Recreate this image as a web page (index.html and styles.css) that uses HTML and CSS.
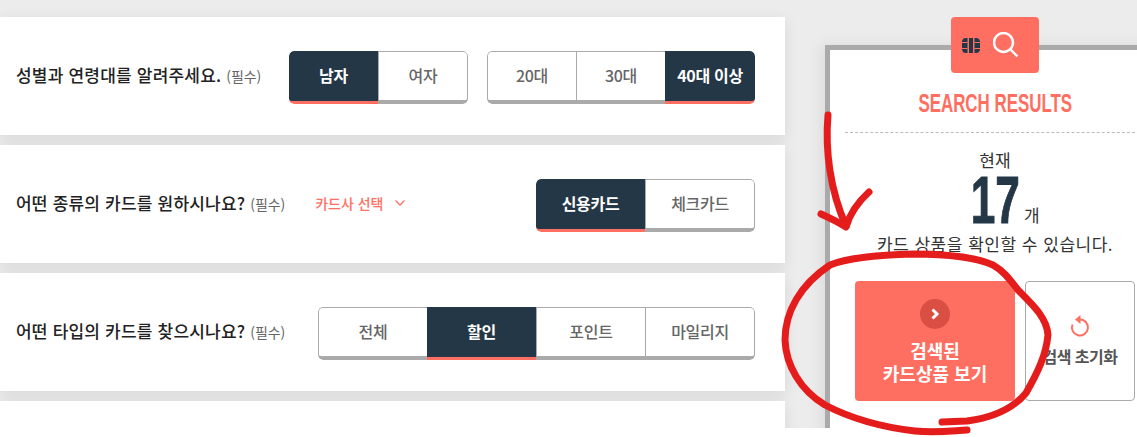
FILE: index.html
```html
<!DOCTYPE html>
<html lang="ko">
<head>
<meta charset="utf-8">
<title>카드 검색</title>
<link rel="stylesheet" href="styles.css">
</head>
<body>
<main class="page">
  <section class="filters">
    <div class="row">
      <p class="question">성별과 연령대를 알려주세요. <small>(필수)</small></p>
      <div class="controls">
        <div class="seg narrow w-179"><button class="on">남자</button><button>여자</button></div>
        <div class="seg narrow w-268"><button>20대</button><button>30대</button><button class="on">40대 이상</button></div>
      </div>
    </div>
    <div class="row">
      <p class="question">어떤 종류의 카드를 원하시나요? <small>(필수)</small></p>
      <a class="company">카드사 선택
        <svg width="12" height="8" viewBox="0 0 12 8"><path d="M1.500 1.500 6 6l4.500-4.500" fill="none" stroke="#ff6f61" stroke-width="1.300"/></svg>
      </a>
      <div class="controls">
        <div class="seg wide w-219"><button class="on">신용카드</button><button>체크카드</button></div>
      </div>
    </div>
    <div class="row">
      <p class="question">어떤 타입의 카드를 찾으시나요? <small>(필수)</small></p>
      <div class="controls">
        <div class="seg wide w-437"><button>전체</button><button class="on">할인</button><button>포인트</button><button>마일리지</button></div>
      </div>
    </div>
    <div class="row"></div>
  </section>
  <aside class="results">
    <div class="tab">
      <svg class="tab-chip" width="18" height="15" viewBox="0 0 18 15"><path d="M4 0h1.500v15H4C1.500 15 0 13.500 0 11V4C0 1.500 1.500 0 4 0ZM7 0h4v15H7ZM12.500 0H14c2.500 0 4 1.500 4 4v7c0 2.500-1.500 4-4 4h-1.500Z" fill="#243746"/><path d="M0 4.500h5.500M0 10.500h5.500M12.500 4.500h5.500M12.500 10.500h5.500" stroke="#ff6f61" stroke-width="1.200"/></svg>
      <svg width="26" height="26" viewBox="0 0 26 26"><circle cx="10.500" cy="10.500" r="9.500" fill="none" stroke="#fff" stroke-width="2.400"/><path d="m17.500 17.500 7 7" stroke="#fff" stroke-width="2.400"/></svg>
    </div>
    <h2 class="title"><span>SEARCH RESULTS</span></h2>
    <div class="summary">
      <p class="now">현재</p>
      <p class="count"><strong>17</strong><span>개</span></p>
      <p class="desc">카드 상품을 확인할 수 있습니다.</p>
    </div>
    <div class="actions">
      <button class="view">
        <span class="go"><svg width="10" height="12" viewBox="0 0 10 12"><path d="M2.500 1.500 7 6l-4.500 4.500" fill="none" stroke="#fff" stroke-width="3"/></svg></span>
        <span>검색된<br>카드상품 보기</span>
      </button>
      <button class="reset">
        <svg width="20" height="24" viewBox="0 0 20 24"><path d="M10 5.500a8 8 0 1 1-7.500 5" fill="none" stroke="#ff6f61" stroke-width="2"/><path d="M10.500 1v9L5 5.500z" fill="#ff6f61"/></svg>
        <span>검색 초기화</span>
      </button>
    </div>
  </aside>
</main>
<svg class="marker" width="1137" height="437" viewBox="0 0 1137 437">
  <g fill="none" stroke="#e51c1c" stroke-width="7" stroke-linecap="round" stroke-linejoin="round">
    <path d="M828 115C825 150 830 190 846 226"/>
    <path d="M821 214C830 218 838 222 846 227 850 213 858 202 869 192"/>
    <path d="M967 430C950 431 935 433 915 431 880 427 850 418 825 405 800 390 786 365 785 340 785 312 800 285 830 265 850 257 880 255 913 254 945 254 975 257 993 265 1005 272 1010 280 1018 290 1033 305 1047 318 1048 335 1046 355 1038 372 1026 393 1012 410 990 418 967 421L942 422"/>
  </g>
</svg>
</body>
</html>
```
FILE: styles.css
```css
* { box-sizing: border-box; }
html, body { margin: 0; height: 437px; overflow: hidden; background: #fff; }
body {
  position: relative;
  font-family: "Noto Sans CJK KR", "Noto Sans", sans-serif;
  color: #222;
}
p, h2 { margin: 0; }
button { font: inherit; cursor: pointer; }

.page {
  display: flex;
  height: 428px;
  overflow: hidden;
  background: #ececec;
  padding-top: 17px;
}

.filters {
  flex: 0 0 785px;
  display: flex;
  flex-direction: column;
  gap: 10px;
}
.row {
  flex: 0 0 118px;
  display: flex;
  align-items: center;
  padding: 0 30px 2px 16px;
  background: #fff;
  box-shadow: 0 4px 14px rgba(0, 0, 0, .09);
}
.question {
  font-size: 17px;
  font-weight: 500;
  letter-spacing: .2px;
  line-height: 24px;
  color: #222;
  white-space: nowrap;
}
.question small {
  font-size: 14px;
  font-weight: 400;
  letter-spacing: -.1px;
  color: #666;
}
.company {
  margin-left: 30px;
  display: flex;
  align-items: center;
  gap: 10px;
  font-size: 14px;
  font-weight: 500;
  color: #ff6f61;
}
.controls { margin: 5px 0 0 auto; display: flex; gap: 19px; }

.seg {
  display: flex;
  height: 53px;
  border-radius: 5px;
  overflow: hidden;
  background: #fff;
}
.w-179 { width: 179px; }
.w-219 { width: 219px; }
.w-268 { width: 268px; }
.w-437 { width: 437px; }
.narrow button { flex: 0 0 89px; }
.wide button { flex: 0 0 109px; }
.seg button {
  padding: 0 0 2px;
  background: #fff;
  color: #666;
  font-size: 16px;
  font-weight: 500;
  letter-spacing: -.3px;
  border: 1px solid #aaa;
  border-right: 0;
  border-bottom: 4px solid #aaa;
  white-space: nowrap;
}
.seg button:first-child { border-radius: 5px 0 0 5px; }
.seg button:last-child { flex: 1 1 0; border-right: 1px solid #aaa; border-radius: 0 5px 5px 0; }
.seg button.on {
  background: #243746;
  color: #fff;
  font-weight: 700;
  border: 0;
  border-bottom: 3px solid #ff6f61;
}

.results {
  position: relative;
  flex: 0 0 340px;
  margin: 28px 0 0 40px;
  padding: 38px 15px 0;
  height: 400px;
  background: #fff;
  border: 5px solid #aaa;
  border-bottom: 0;
  box-shadow: -4px 0 14px rgba(0, 0, 0, .07);
  text-align: center;
}
.tab {
  position: absolute;
  top: -33px;
  left: 121px;
  width: 88px;
  height: 56px;
  display: flex;
  align-items: center;
  gap: 13px;
  padding: 0 0 0 11px;
  background: #ff6f61;
  border-radius: 4px;
}
.title {
  height: 45px;
  font-family: "Liberation Sans", sans-serif;
  font-size: 26px;
  line-height: 30px;
  font-weight: 700;
  color: #ff6f61;
  border-bottom: 1px dashed #bbb;
  white-space: nowrap;
}
.title span { display: inline-block; transform: scaleX(.65); }
.summary { padding-top: 15px; }
.now { font-size: 17px; line-height: 24px; color: #333; }
.count {
  position: relative;
  height: 50px;
  margin-top: 3px;
  line-height: 50px;
  color: #243746;
}
.count strong {
  display: inline-block;
  font-family: "Liberation Sans", sans-serif;
  font-size: 67px;
  font-weight: 700;
  line-height: 50px;
  -webkit-text-stroke: 1px #243746;
  transform: scaleX(.66);
}
.count span {
  position: absolute;
  left: 179px;
  top: 26px;
  font-size: 17px;
  line-height: 28px;
  color: #333;
}
.desc { font-size: 17px; line-height: 24px; letter-spacing: .5px; color: #333; margin-top: 7px; white-space: nowrap; }

.actions { display: flex; gap: 10px; margin: 25px 0 0 10px; }
.actions button { height: 120px; border-radius: 4px; display: flex; flex-direction: column; align-items: center; }
.view {
  flex: 0 0 160px;
  border: 0;
  padding-top: 18px;
  gap: 10px;
  background: #ff6f61;
  color: #fff;
  font-size: 18px;
  font-weight: 700;
  line-height: 23px;
}
.go {
  width: 30px;
  height: 30px;
  border-radius: 50%;
  background: #d94f43;
  display: flex;
  align-items: center;
  justify-content: center;
}
.reset {
  flex: 0 0 110px;
  padding: 32px 0 0;
  gap: 8px;
  background: #fff;
  border: 1px solid #aaa;
  color: #555;
  font-size: 16px;
  font-weight: 700;
  letter-spacing: -.5px;
  line-height: 20px;
  white-space: nowrap;
}

.marker { position: absolute; left: 0; top: 0; pointer-events: none; }
```
